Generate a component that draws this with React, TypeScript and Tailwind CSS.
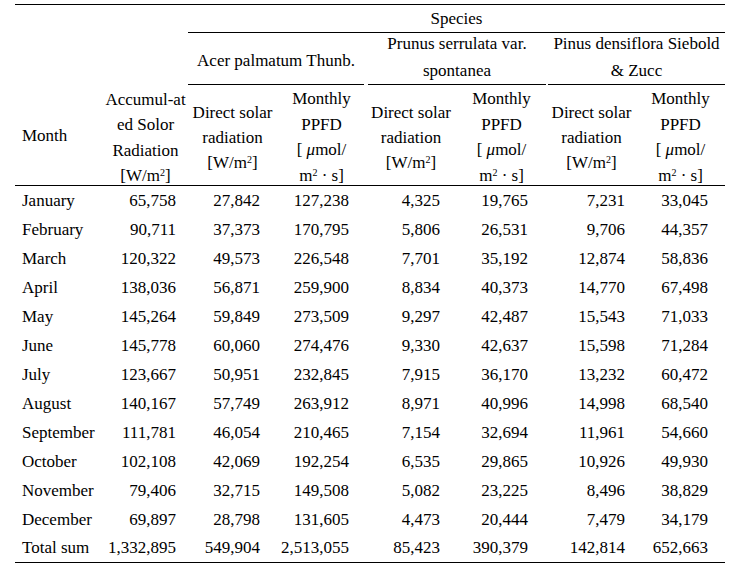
const rows: string[][] = [
  ['January', '65,758', '27,842', '127,238', '4,325', '19,765', '7,231', '33,045'],
  ['February', '90,711', '37,373', '170,795', '5,806', '26,531', '9,706', '44,357'],
  ['March', '120,322', '49,573', '226,548', '7,701', '35,192', '12,874', '58,836'],
  ['April', '138,036', '56,871', '259,900', '8,834', '40,373', '14,770', '67,498'],
  ['May', '145,264', '59,849', '273,509', '9,297', '42,487', '15,543', '71,033'],
  ['June', '145,778', '60,060', '274,476', '9,330', '42,637', '15,598', '71,284'],
  ['July', '123,667', '50,951', '232,845', '7,915', '36,170', '13,232', '60,472'],
  ['August', '140,167', '57,749', '263,912', '8,971', '40,996', '14,998', '68,540'],
  ['September', '111,781', '46,054', '210,465', '7,154', '32,694', '11,961', '54,660'],
  ['October', '102,108', '42,069', '192,254', '6,535', '29,865', '10,926', '49,930'],
  ['November', '79,406', '32,715', '149,508', '5,082', '23,225', '8,496', '38,829'],
  ['December', '69,897', '28,798', '131,605', '4,473', '20,444', '7,479', '34,179'],
  ['Total sum', '1,332,895', '549,904', '2,513,055', '85,423', '390,379', '142,814', '652,663'],
]

// right padding of each number column, read off the reference
const padRight = ['pr-[12px]', 'pr-[17px]', 'pr-[17px]', 'pr-[16px]', 'pr-[19px]', 'pr-[11px]', 'pr-[17px]']

function Sq() {
  return <sup className="text-[10px]">2</sup>
}

function DirectHead() {
  return (
    <th className="border-b border-black font-normal align-top p-0">
      <div className="h-[100px] pt-[15px] leading-[25px]">
        Direct solar
        <br />
        radiation
        <br />
        [W/m<Sq />]
      </div>
    </th>
  )
}

function PpfdHead() {
  return (
    <th className="border-b border-black font-normal align-top p-0">
      <div className="h-[100px] pt-[1px] leading-[25.7px]">
        Monthly
        <br />
        PPFD
        <br />[ <span className="italic">μ</span>mol/
        <br />
        m<Sq /> · s]
      </div>
    </th>
  )
}

export default function App() {
  return (
    <div className="w-[732px] h-[571px] bg-white text-black font-[family-name:Liberation_Serif,Times_New_Roman,serif] text-[17px] pt-[4px] pl-[15px]">
      <table className="table-fixed border-separate border-spacing-0 w-[710px]">
        <colgroup>
          <col className="w-[88px]" />
          <col className="w-[85px]" />
          <col className="w-[89px]" />
          <col className="w-[89px]" />
          <col className="w-[90px]" />
          <col className="w-[91px]" />
          <col className="w-[89px]" />
          <col className="w-[89px]" />
        </colgroup>
        <thead className="leading-[25px]">
          <tr className="h-[29px]">
            <th rowSpan={3} className="border-t border-b border-black font-normal text-left align-bottom pl-[7px] pb-[37px]">
              Month
            </th>
            <th rowSpan={3} className="border-t border-b border-black font-normal align-bottom p-0">
              <div className="h-[100px] pt-[2px] leading-[25.3px]">
                Accumul-at
                <br />
                ed Solor
                <br />
                Radiation
                <br />
                [W/m<Sq />]
              </div>
            </th>
            <th colSpan={6} className="border-t border-black font-normal align-middle p-0">
              <div className="border-b border-black h-[28px] leading-[28px]">Species</div>
            </th>
          </tr>
          <tr className="h-[52px]">
            <th colSpan={2} className="font-normal p-0 align-bottom">
              <div className="border-b border-black mr-[2px] h-[52px] pt-[4px] flex items-center justify-center">
                Acer palmatum Thunb.
              </div>
            </th>
            <th colSpan={2} className="font-normal p-0 align-bottom">
              <div className="border-b border-black ml-[2px] mr-[1px] h-[52px] leading-[27px]">
                <div className="relative -top-[3px]">
                  Prunus serrulata var.
                  <br />
                  spontanea
                </div>
              </div>
            </th>
            <th colSpan={2} className="font-normal p-0 align-bottom">
              <div className="border-b border-black ml-[1px] h-[52px] leading-[27px]">
                <div className="relative -top-[3px]">
                  Pinus densiflora Siebold
                  <br />
                  &amp; Zucc
                </div>
              </div>
            </th>
          </tr>
          <tr className="h-[100px]">
            <DirectHead />
            <PpfdHead />
            <DirectHead />
            <PpfdHead />
            <DirectHead />
            <PpfdHead />
          </tr>
        </thead>
        <tbody>
          {rows.map((r, i) => {
            const last = i === rows.length - 1
            return (
              <tr key={r[0]} className="h-[29px]">
                <td className={`pl-[7px] whitespace-nowrap ${last ? 'border-b border-black' : ''}`}>{r[0]}</td>
                {r.slice(1).map((v, j) => (
                  <td key={j} className={`text-right ${padRight[j]} ${last ? 'border-b border-black' : ''}`}>
                    {v}
                  </td>
                ))}
              </tr>
            )
          })}
        </tbody>
      </table>
    </div>
  )
}
